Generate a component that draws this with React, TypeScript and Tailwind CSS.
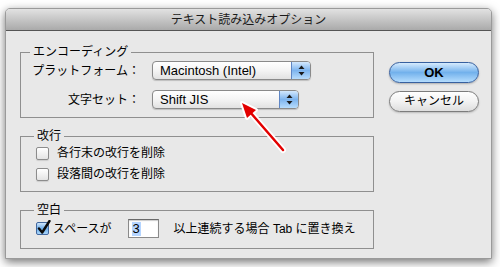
import React from "react";

const font = { fontFamily: '"Liberation Sans", "Noto Sans CJK JP", sans-serif' };

function Arrows() {
  return (
    <svg width="7" height="11" viewBox="0 0 7 11">
      <path d="M3.5 0.5 L6.5 4 L0.5 4 Z" fill="#1a1a1a" />
      <path d="M3.5 10.5 L6.5 7 L0.5 7 Z" fill="#1a1a1a" />
    </svg>
  );
}

function Popup({ label, width }: { label: string; width: string }) {
  return (
    <div
      className={`${width} flex h-[19px] items-stretch overflow-hidden rounded-[4px] border border-[#8a8a8a] bg-gradient-to-b from-white via-[#f4f4f4] to-[#e2e2e2] shadow-[0_1px_1px_rgba(0,0,0,0.18)]`}
    >
      <span className="flex-1 pl-[7px] text-[13px] leading-[17px] text-black">{label}</span>
      <span className="flex w-[19px] items-center justify-center border-l border-[#5f86c4] bg-gradient-to-b from-[#d3e8fd] via-[#7db4ee] to-[#b7dcfc]">
        <Arrows />
      </span>
    </div>
  );
}

function Checkbox({ checked = false }: { checked?: boolean }) {
  if (checked) {
    return (
      <span className="relative flex h-[13px] w-[13px] items-center justify-center rounded-[2px] border border-[#41679f] bg-gradient-to-b from-[#cfe6fc] via-[#6eaeea] to-[#a9d6fb]">
        <svg className="absolute -top-[3px] left-[0px]" width="14" height="15" viewBox="0 0 14 15">
          <path d="M2 8.5 L5.2 12.5 L12.5 1" fill="none" stroke="#0b0b0b" strokeWidth="2.4" strokeLinecap="round" strokeLinejoin="round" />
        </svg>
      </span>
    );
  }
  return (
    <span className="block h-[13px] w-[13px] rounded-[2px] border border-[#8c8c8c] bg-gradient-to-b from-white to-[#e4e4e4] shadow-[0_1px_1px_rgba(0,0,0,0.12)]" />
  );
}

function Group({ title, legendClass, children }: { title: string; legendClass: string; children: React.ReactNode }) {
  return (
    <fieldset className="border border-[#8f8f8f]">
      <legend className={`${legendClass} px-[3px] text-[12px] leading-[16px] text-black`}>{title}</legend>
      {children}
    </fieldset>
  );
}

export default function App() {
  return (
    <div className="relative h-[267px] w-[500px] overflow-hidden bg-white" style={font}>
      <div className="ml-[5px] mt-[8px] flex h-[251px] w-[487px] flex-col overflow-hidden rounded-t-[5px] border border-[#9a9a9a] bg-[#e8e8e8] shadow-[0_3px_10px_rgba(0,0,0,0.55)]">
        {/* title bar */}
        <div className="flex h-[22px] shrink-0 items-center justify-center border-b border-[#555] bg-gradient-to-b from-[#e2e2e2] to-[#aaaaaa] text-[12px] text-[#1a1a1a]">
          テキスト読み込みオプション
        </div>

        <div className="flex gap-[15px] pl-[14px] pt-[13px]">
          {/* left column */}
          <div className="flex w-[354px] flex-col gap-[10px]">
            <Group title="エンコーディング" legendClass="ml-[9px]">
              <div className="grid grid-cols-[119px_1fr] items-center gap-x-[12px] gap-y-[10px] pb-[8px] pt-[1px] text-[12px] text-black">
                <span className="text-right">プラットフォーム：</span>
                <Popup label="Macintosh (Intel)" width="w-[159px]" />
                <span className="text-right">文字セット：</span>
                <Popup label="Shift JIS" width="w-[147px]" />
              </div>
            </Group>

            <Group title="改行" legendClass="ml-[13px]">
              <div className="flex flex-col gap-[3px] pb-[8px] pl-[15px] text-[12px] text-black">
                <div className="flex h-[18px] items-center gap-[8px]">
                  <Checkbox />
                  <span>各行末の改行を削除</span>
                </div>
                <div className="flex h-[18px] items-center gap-[8px]">
                  <Checkbox />
                  <span>段落間の改行を削除</span>
                </div>
              </div>
            </Group>

            <Group title="空白" legendClass="ml-[13px]">
              <div className="flex h-[30px] items-start pl-[15px] pt-[1px] text-[12px] text-black">
                <div className="flex h-[19px] items-center">
                  <Checkbox checked />
                  <span className="ml-[4px]">スペースが</span>
                  <span className="ml-[16px] flex h-[19px] w-[31px] items-center border border-[#8a8a8a] border-t-[#6a6a6a] bg-white pl-[3px] shadow-[inset_0_1px_1px_rgba(0,0,0,0.2)]">
                    <span className="bg-[#b5d5ff] px-[1px] text-[13px] leading-[14px]">3</span>
                  </span>
                  <span className="ml-[15px]">以上連続する場合 Tab に置き換え</span>
                </div>
              </div>
            </Group>
          </div>

          {/* right column */}
          <div className="flex w-[90px] flex-col gap-[8px] pt-[18px]">
            <button className="h-[21px] rounded-full border border-[#37609f] bg-gradient-to-b from-[#d6ebfd] via-[#72b1ec] to-[#b4dcfd] text-[13px] font-bold leading-[19px] text-black shadow-[0_1px_2px_rgba(0,0,0,0.25)]">
              OK
            </button>
            <button className="h-[21px] rounded-full border border-[#7c7c7c] bg-gradient-to-b from-white via-[#f2f2f2] to-[#dedede] text-[12px] leading-[19px] text-black shadow-[0_1px_2px_rgba(0,0,0,0.2)]">
              キャンセル
            </button>
          </div>
        </div>
      </div>

      {/* red arrow callout */}
      <svg className="absolute left-0 top-0" width="500" height="267" viewBox="0 0 500 267">
        <line x1="283" y1="150" x2="250" y2="112" stroke="white" strokeWidth="6" strokeLinecap="round" />
        <path d="M242 103 L256 110 L247 118 Z" fill="white" stroke="white" strokeWidth="4" strokeLinejoin="round" />
        <line x1="283" y1="150" x2="250" y2="112" stroke="#e30000" strokeWidth="2.5" strokeLinecap="round" />
        <path d="M242 103 L256 110 L247 118 Z" fill="#e30000" />
      </svg>
    </div>
  );
}
